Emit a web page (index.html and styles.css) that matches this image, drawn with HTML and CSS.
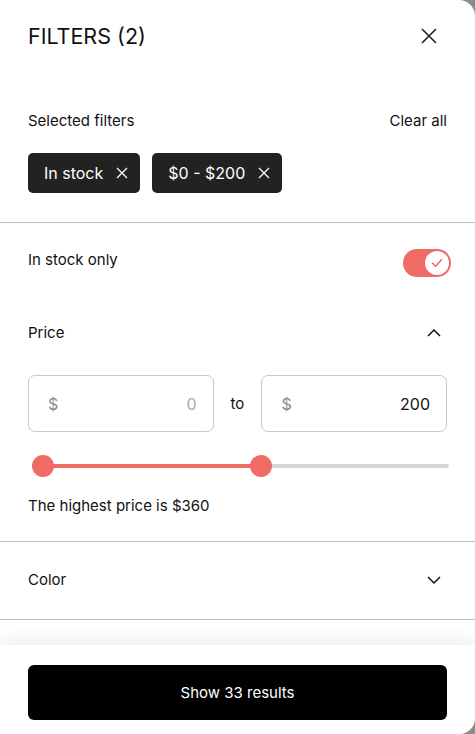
FILE: index.html
```html
<!DOCTYPE html>
<html lang="en">
<head>
<meta charset="utf-8">
<title>Filters</title>
<link rel="stylesheet" href="styles.css">
</head>
<body>
<div class="panel">
  <div class="scroll">
    <header class="head">
      <h1 class="title">FILTERS (2)</h1>
      <button class="close" aria-label="Close">
        <svg width="16" height="16" viewBox="0 0 16 16"><path d="M1 1L15 15M15 1L1 15" stroke="#222" stroke-width="1.6" fill="none"/></svg>
      </button>
    </header>

    <section class="selected">
      <div class="row">
        <span class="label">Selected filters</span>
        <span class="label">Clear all</span>
      </div>
      <div class="chips">
        <span class="chip">In stock
          <svg width="12" height="12" viewBox="0 0 12 12"><path d="M1 1L11 11M11 1L1 11" stroke="#fff" stroke-width="1.3" fill="none"/></svg>
        </span>
        <span class="chip">$0 - $200
          <svg width="12" height="12" viewBox="0 0 12 12"><path d="M1 1L11 11M11 1L1 11" stroke="#fff" stroke-width="1.3" fill="none"/></svg>
        </span>
      </div>
    </section>

    <section class="price">
      <div class="stock-row">
        <span class="label">In stock only</span>
        <span class="toggle">
          <span class="knob">
            <svg width="14" height="14" viewBox="0 0 14 14"><path d="M2.5 7.2L5.6 10.2L11.5 3.8" stroke="#ee6b66" stroke-width="1.6" fill="none" stroke-linecap="round" stroke-linejoin="round"/></svg>
          </span>
        </span>
      </div>
      <div class="acc-row price-head">
        <span class="label">Price</span>
        <svg width="14" height="14" viewBox="0 0 14 14"><path d="M1 10L7 4L13 10" stroke="#111" stroke-width="1.5" fill="none"/></svg>
      </div>
      <div class="inputs">
        <div class="field"><span class="cur">$</span><span class="val ph">0</span></div>
        <span class="to">to</span>
        <div class="field"><span class="cur">$</span><span class="val">200</span></div>
      </div>
      <div class="slider">
        <div class="track"><div class="fill" style="width:53.7%"></div></div>
        <span class="thumb t1"></span>
        <span class="thumb t2" style="left:53.7%"></span>
      </div>
      <p class="note">The highest price is $360</p>
    </section>

    <section class="acc">
      <div class="acc-row">
        <span class="label">Color</span>
        <svg width="14" height="14" viewBox="0 0 14 14"><path d="M1 4L7 10L13 4" stroke="#111" stroke-width="1.5" fill="none"/></svg>
      </div>
    </section>
  </div>
  <footer class="foot">
    <button class="show">Show 33 results</button>
  </footer>
</div>
</body>
</html>
```
FILE: styles.css
```css
* { box-sizing: border-box; }
html, body { margin: 0; padding: 0; }
body {
  background: #8c8c8c;
  font-family: Inter, "Liberation Sans", Arial, sans-serif;
  color: #111;
  width: 475px;
  height: 734px;
  overflow: hidden;
}
.panel {
  width: 475px;
  height: 734px;
  background: #fff;
  border-radius: 0 16px 16px 0;
  display: flex;
  flex-direction: column;
  overflow: hidden;
}
.scroll { flex: 1; overflow: hidden; }
.head {
  height: 72px;
  padding: 0 38px 0 28px;
  display: flex;
  align-items: center;
  justify-content: space-between;
}
.title {
  margin: 0;
  font-size: 21.5px;
  font-weight: 400;
  color: #111;
}
.close {
  background: none; border: 0; padding: 0; width: 16px; height: 16px;
  display: flex;
}
.label { font-size: 15px; line-height: 20px; color: #111; }
.selected {
  padding: 39px 28px 29px;
  border-bottom: 1px solid #bdbdbd;
}
.row { display: flex; justify-content: space-between; }
.chips { display: flex; gap: 12px; margin-top: 22px; }
.chip {
  height: 40px;
  background: #222;
  color: #fff;
  border-radius: 5px;
  font-size: 16px;
  display: flex;
  align-items: center;
  gap: 13px;
  padding: 0 12px 0 16px;
}
.price {
  padding: 26px 24px 25px 28px;
  border-bottom: 1px solid #bdbdbd;
}
.stock-row {
  display: flex;
  justify-content: space-between;
  align-items: flex-start;
}
.stock-row .label { margin-top: 1px; }
.toggle {
  width: 48px; height: 28px;
  border-radius: 14px;
  background: #ee6b66;
  display: flex;
  align-items: center;
  justify-content: flex-end;
  padding: 2px;
}
.knob {
  width: 24px; height: 24px;
  border-radius: 50%;
  background: #fff;
  display: flex; align-items: center; justify-content: center;
}
.acc-row {
  display: flex;
  justify-content: space-between;
  align-items: center;
  padding-right: 10px;
}
.price-head { margin-top: 46px; }
.inputs {
  display: grid;
  grid-template-columns: 1fr auto 1fr;
  gap: 17px;
  align-items: center;
  margin-top: 32px;
  padding-right: 4px;
}
.field {
  height: 57px;
  border: 1px solid #c8c8c8;
  border-radius: 7px;
  display: flex;
  align-items: center;
  justify-content: space-between;
  padding: 0 16px 0 19px;
  font-size: 16px;
}
.cur { color: #8a8a8a; }
.val { color: #111; }
.val.ph { color: #aaa; }
.to { font-size: 15px; color: #111; }
.slider {
  position: relative;
  height: 22px;
  margin: 23px 2px 0 15px;
}
.track {
  position: absolute; left: 0; right: 0; top: 9px;
  height: 4px; border-radius: 2px;
  background: #d4d4d4;
}
.fill { height: 100%; background: #ee6b66; border-radius: 2px; }
.thumb {
  position: absolute; top: 0;
  width: 22px; height: 22px; margin-left: -11px;
  border-radius: 50%;
  background: #ee6b66;
}
.t1 { left: 0; }
.note { margin: 19px 0 0; font-size: 15px; line-height: 20px; }
.acc {
  padding: 28px 24px 29px 28px;
  border-bottom: 1px solid #bdbdbd;
}
.foot {
  height: 89px;
  padding: 20px 28px 0;
  background: #fff;
  box-shadow: 0 -6px 16px rgba(0,0,0,0.07);
  position: relative;
}
.show {
  width: 100%; height: 55px;
  background: #000; color: #fff;
  border: 0; border-radius: 6px;
  font-family: inherit;
  font-size: 15px;
}
```
